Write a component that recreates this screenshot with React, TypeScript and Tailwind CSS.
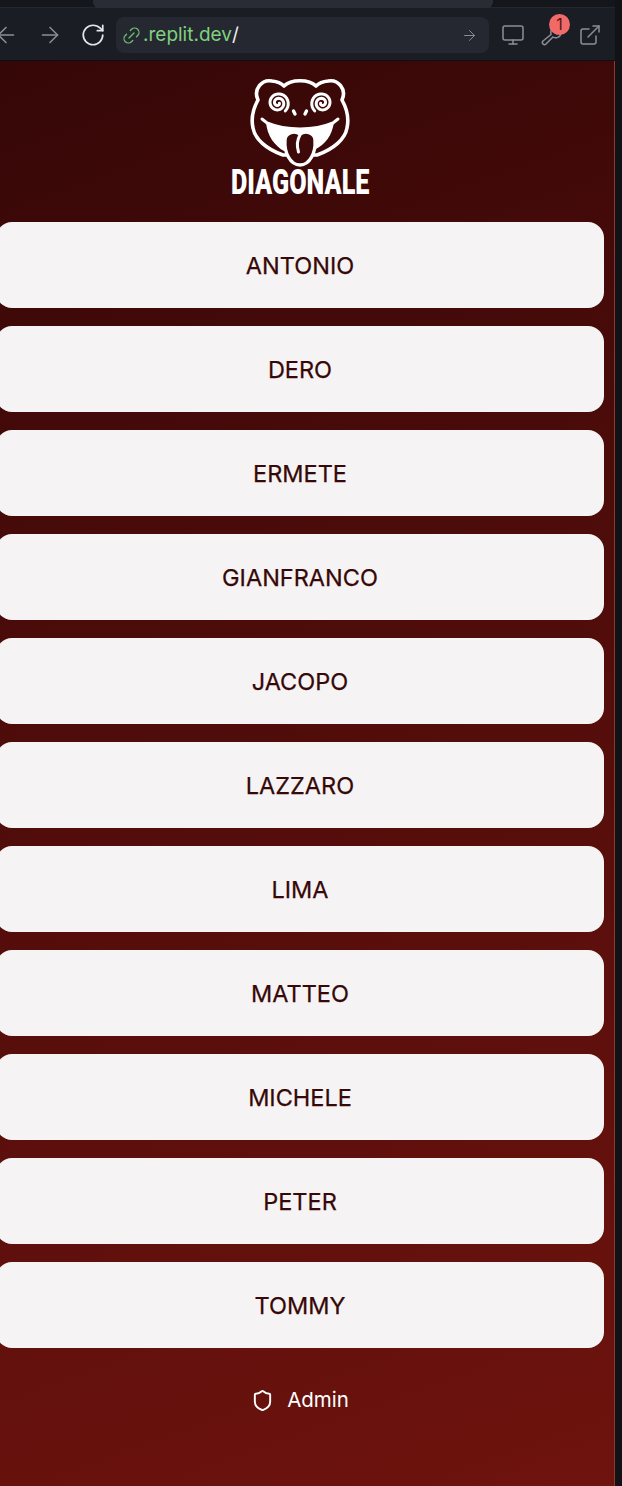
import React from 'react';
import { ArrowLeft, ArrowRight, RotateCw, Link2, Monitor, ExternalLink, Shield } from 'lucide-react';

const players = ['ANTONIO', 'DERO', 'ERMETE', 'GIANFRANCO', 'JACOPO', 'LAZZARO', 'LIMA', 'MATTEO', 'MICHELE', 'PETER', 'TOMMY'];

// spiral eye, dir flips the winding for the right one
const spiral = (cx: number, cy: number, dir: number) => {
  let d = '';
  for (let i = 0; i <= 60; i++) {
    const a = (i / 60) * Math.PI * 4.2 + 0.2;
    const r = 1.4 + (i / 60) * 9.4;
    const x = cx + dir * r * Math.cos(a);
    const y = cy + r * Math.sin(a);
    d += `${i === 0 ? 'M' : 'L'}${x.toFixed(2)} ${y.toFixed(2)}`;
  }
  return d;
};

const Logo: React.FC = () => (
  <svg width="100" height="92" viewBox="0 0 100 92" fill="none">
    {/* head */}
    <path
      d="M8 24C3 13 12 3 22 5C27 5.500 31 7 34 10C41 3 59 3 66 10C69 7 73 5.500 78 5C88 3 97 13 92 24C97 33 99 43 97 52C95 63 84 73 67 79L33 79C16 73 5 63 3 52C1 43 3 33 8 24Z"
      stroke="#fff"
      strokeWidth="3.6"
      strokeLinejoin="round"
    />
    {/* eyes */}
    <path d={spiral(28, 27, 1)} stroke="#fff" strokeWidth="3" strokeLinecap="round" />
    <path d={spiral(72, 27, -1)} stroke="#fff" strokeWidth="3" strokeLinecap="round" />
    {/* nose */}
    <path d="M43.500 35L45 38" stroke="#fff" strokeWidth="3.400" strokeLinecap="round" />
    <path d="M56.500 35L55 38" stroke="#fff" strokeWidth="3.400" strokeLinecap="round" />
    {/* mouth */}
    <path d="M12 43L17 47C36 55 64 55 83 47L88 43" stroke="#fff" strokeWidth="3" strokeLinecap="round" />
    <path d="M16 46C36 54 64 54 84 46C82 60 75 68 66 73L34 75C25 70 17 60 16 46Z" fill="#fff" />
    {/* tongue */}
    <path d="M35 64C35 57 44 54 50 58C56 54 65 57 65 64C66 76 60 89 50 89C40 89 34 76 35 64Z" fill="#3d0a09" stroke="#fff" strokeWidth="3.4" />
    <path d="M50 59C47 64 47 71 48.500 76" stroke="#fff" strokeWidth="3" strokeLinecap="round" />
  </svg>
);

const BrowserBar: React.FC = () => (
  <div className="h-[61px] bg-[#1a1d24] border-b border-[#0f1014]">
    <div className="h-[8px] bg-[#14161c] border-b border-[#23262d] pl-[93px]">
      <div className="w-[400px] h-[8px] bg-[#2a2c35] rounded-b-md" />
    </div>
    <div className="flex items-center h-[54px]">
      <ArrowLeft className="w-[26px] h-[26px] ml-[-7px] text-[#8b8e95]" strokeWidth={1.4} />
      <ArrowRight className="w-[26px] h-[26px] ml-[18px] text-[#8b8e95]" strokeWidth={1.4} />
      <RotateCw className="w-[26px] h-[26px] ml-[17px] text-[#e4e5e7]" strokeWidth={1.6} />
      <div className="ml-[10px] w-[373px] h-[36px] bg-[#252830] rounded-lg flex items-center pl-[5px] pr-[11px]">
        <Link2 className="w-[21px] h-[21px] text-[#6cc070] -rotate-45" strokeWidth={1.5} />
        <span className="ml-[1px] text-[19px] text-[#7fd07f]">.replit.dev</span>
        <span className="text-[19px] text-[#f0f0f0]">/</span>
        <ArrowRight className="w-[17px] h-[17px] ml-auto text-[#8b8e95]" strokeWidth={1.4} />
      </div>
      <Monitor className="w-[24px] h-[24px] ml-[12px] text-[#8b8e95]" strokeWidth={1.5} />
      <div className="relative ml-[15px] w-[24px] h-[24px]">
        <svg width="24" height="24" viewBox="0 0 24 24" fill="none" stroke="#8b8e95" strokeWidth="1.5" strokeLinecap="round">
          <path d="M3 21C2 20 2 19 3 18L11 11.500C10 8 12 4 16 3L18 5L15 8L17 11L20 9L21 11C20 14 16 16 13 14L6 21C5 22 4 22 3 21Z" />
        </svg>
        <span className="absolute top-[-9px] left-[9px] w-[21px] h-[21px] rounded-full bg-[#f06a6a] text-[#5a1414] text-[16px] leading-[21px] text-center">1</span>
      </div>
      <ExternalLink className="w-[24px] h-[24px] ml-[14px] text-[#8b8e95]" strokeWidth={1.5} />
    </div>
  </div>
);

export default function App() {
  return (
    <div className="w-[622px] h-[1486px] overflow-hidden flex bg-[#111216] font-['Inter',sans-serif]">
      <div className="w-[615px] shrink-0 flex flex-col">
        <BrowserBar />
        <main className="flex-1 border-r border-[#8a3a2e] bg-[linear-gradient(160deg,#360707,#6f130e)] flex flex-col items-center pr-[14px]">
          <div className="mt-[15px] h-[92px]">
            <Logo />
          </div>
          <div className="mt-[-3px] h-[36px] text-white text-[35px] leading-[36px] font-black font-['Roboto',sans-serif] scale-x-[0.72]">DIAGONALE</div>
          <div className="w-[608px] mt-[21px] flex flex-col gap-[18px]">
            {players.map((name) => (
              <button key={name} className="h-[86px] pt-[2px] rounded-2xl bg-[#f5f3f3] text-[#360808] text-[23.5px] font-normal [-webkit-text-stroke:0.25px_#360808]">
                {name}
              </button>
            ))}
          </div>
          <div className="mt-[37px] flex items-center text-white text-[20.5px]">
            <Shield className="w-[23px] h-[23px]" strokeWidth={2} />
            <span className="ml-[13px]">Admin</span>
          </div>
        </main>
      </div>
    </div>
  );
}
